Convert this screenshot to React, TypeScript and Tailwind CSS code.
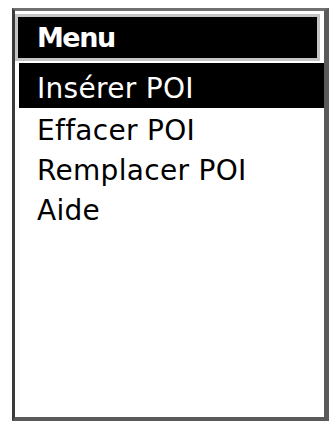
import React from "react";

const items = ["Insérer POI", "Effacer POI", "Remplacer POI", "Aide"];

export default function App() {
  const font = { fontFamily: '"Comic Sans MS", "DejaVu Sans", sans-serif' };
  return (
    <div className="w-[329px] h-[421px] bg-white pt-[8px] pl-[12px]" style={font}>
      <div className="w-[317px] h-[413px] bg-white border-l-[3px] border-l-[#3a3a3a] border-t-[3px] border-t-[#707070] border-r-[5px] border-r-[#5a5a5a] border-b-[4px] border-b-[#5a5a5a] flex flex-col">
        <div className="mt-[3px] w-[305px] h-[47px] border-[3px] border-[#c4c4c4] bg-black flex items-center pl-[19px]">
          <span className="text-white font-bold text-[27px] leading-none tracking-[-1.5px] -mt-[1px]">
            Menu
          </span>
        </div>
        <ul className="mt-[2px] flex flex-col">
          {items.map((label, i) => (
            <li
              key={label}
              className={
                i === 0
                  ? "ml-[4px] h-[45px] bg-black text-white pl-[18px] pt-[7px] text-[28px] leading-[38px] tracking-[0.3px]"
                  : i === 1
                    ? "ml-[4px] mt-[3px] h-[40px] text-black pl-[18px] text-[28px] leading-[40px] tracking-[0.3px]"
                    : "ml-[4px] h-[40px] text-black pl-[18px] text-[28px] leading-[40px] tracking-[0.3px]"
              }
            >
              {label}
            </li>
          ))}
        </ul>
      </div>
    </div>
  );
}
